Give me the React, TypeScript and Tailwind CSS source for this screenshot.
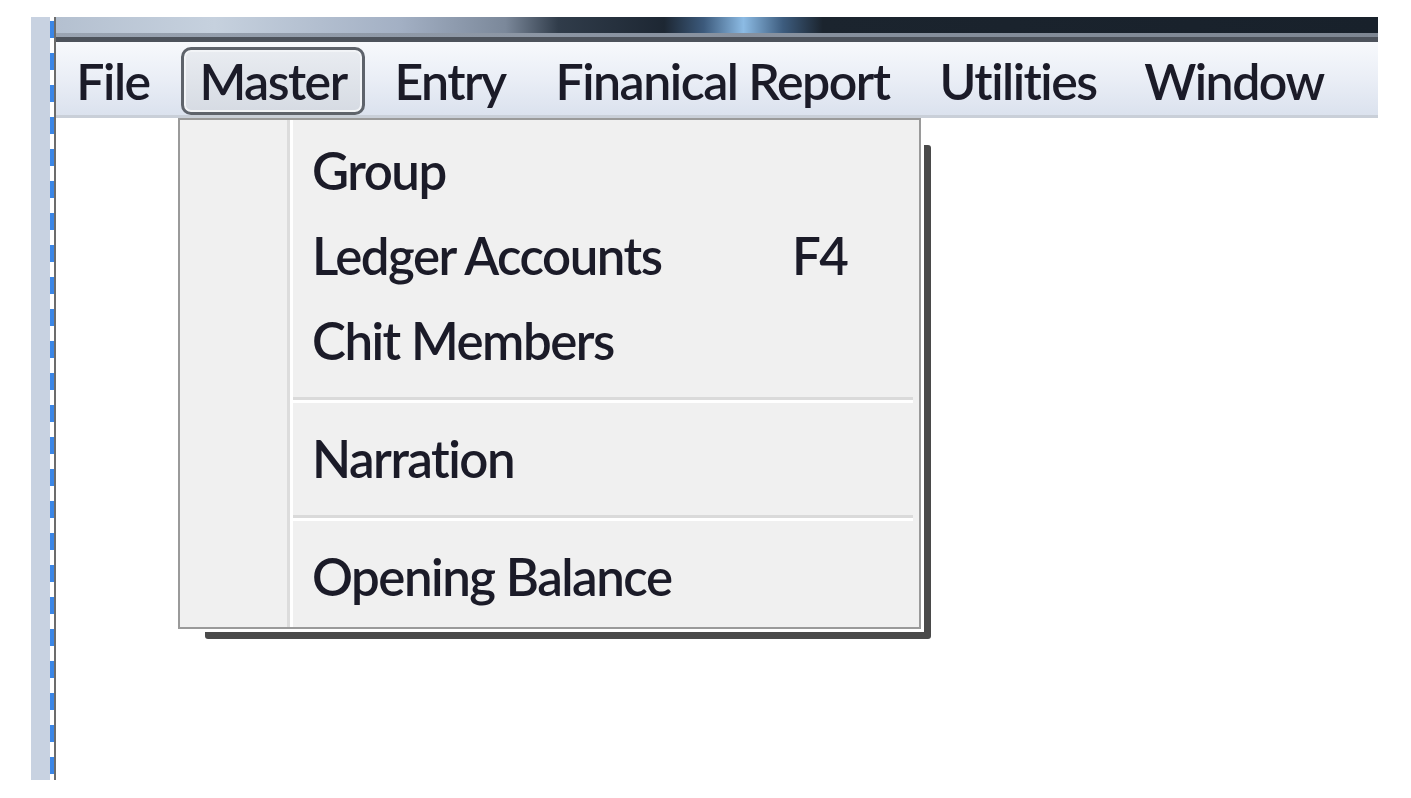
const menus = [
  { name: "File", w: "w-[114px]" },
  { name: "Master", w: "w-[184px]" },
  { name: "Entry", w: "w-[148px]" },
  { name: "Finanical Report", w: "w-[375px]" },
  { name: "Utilities", w: "w-[194px]" },
  { name: "Window", w: "w-[216px]" },
];

type Row = { label?: string; key?: string; sep?: boolean };
const masterItems: Row[] = [
  { label: "Group" },
  { label: "Ledger Accounts", key: "F4" },
  { label: "Chit Members" },
  { sep: true },
  { label: "Narration" },
  { sep: true },
  { label: "Opening Balance" },
];

const MasterMenu = () => (
  <div className="absolute left-[122px] top-[101px] w-[743px] h-[511px]">
    {/* drop shadow */}
    <div className="absolute left-[27px] top-[27px] -right-[10px] -bottom-[10px] bg-[#4a4a4a] rounded-[3px]" />
    <div className="relative h-full border-2 border-[#9a9a9a] bg-[#f0f0f0] shadow-[3px_3px_0_#ffffff] flex">
      <div className="w-[110px] shrink-0 border-r-[3px] border-[#dcdcdc]" />
      <div className="w-[3px] bg-white" />
      <div className="flex-1 flex flex-col pt-[8px] pr-[6px]">
        {masterItems.map((item, i) =>
          item.sep ? (
            <div key={i} className="h-[33px] flex flex-col justify-center">
              <div className="h-[3px] bg-[#dadada]" />
              <div className="h-[3px] bg-white" />
            </div>
          ) : (
            <div key={i} className="h-[85px] flex items-center pl-[19px] text-[51px] leading-none whitespace-nowrap tracking-[-1.5px] text-[#1b1b28]">
              <span className="w-[480px]">{item.label}</span>
              {item.key && <span>{item.key}</span>}
            </div>
          )
        )}
      </div>
    </div>
  </div>
);

export default function App() {
  return (
    <div className="w-[1411px] h-[798px] bg-white flex pt-[17px] pl-[31px] font-['Lato',sans-serif] font-semibold [font-variant-ligatures:none]">
      <div className="w-[19px] h-[763px] bg-[#c8d2e1]" />
      <div className="w-[4px] h-[763px] bg-[repeating-linear-gradient(to_bottom,#ffffff_0px,#ffffff_4px,#3b86e6_4px,#3b86e6_21px,#ffffff_21px,#ffffff_32px)]" />
      <div className="w-[2px] h-[763px] bg-[#6c6c6c]" />
      <div className="w-[1322px] flex flex-col relative">
        <div className="h-[16px] bg-[linear-gradient(to_right,#b4c0d0_0%,#c6d1de_12%,#a3b0c4_26%,#7b889a_34%,#303c4a_38%,#1d2733_46%,#3c5a7c_49%,#8cbbe4_52%,#3d5c7e_55%,#1b242e_58%,#18212b_100%)]" />
        <div className="h-[4px] bg-[linear-gradient(to_right,#9aa4b2,#8a94a2_40%,#7d8692)]" />
        <div className="h-[5px] bg-[#4d535c]" />
        <div className="h-[73px] flex items-start pt-[5px] gap-[11px] bg-[linear-gradient(to_bottom,#f7f9fc,#eaeef6_50%,#dbe2ee)]">
          {menus.map((m) => (
            <div
              key={m.name}
              className={
                m.name === "Master"
                  ? `${m.w} shrink-0 h-[68px] flex items-center justify-center rounded-[10px] border-[3px] border-[#5e636b] bg-[linear-gradient(to_bottom,#e9ecf1,#d6dbe3)] shadow-[inset_0_0_0_2px_#f2f4f7] text-[50px] leading-none whitespace-nowrap tracking-[-1.5px] text-[#1b1b28]`
                  : `${m.w} shrink-0 h-[68px] flex items-center justify-center text-[50px] leading-none whitespace-nowrap tracking-[-1.5px] text-[#1b1b28]`
              }
            >
              {m.name}
            </div>
          ))}
        </div>
        <div className="h-[3px] bg-[#c9cfd8]" />
        <div className="flex-1 bg-white" />
        <MasterMenu />
      </div>
    </div>
  );
}
